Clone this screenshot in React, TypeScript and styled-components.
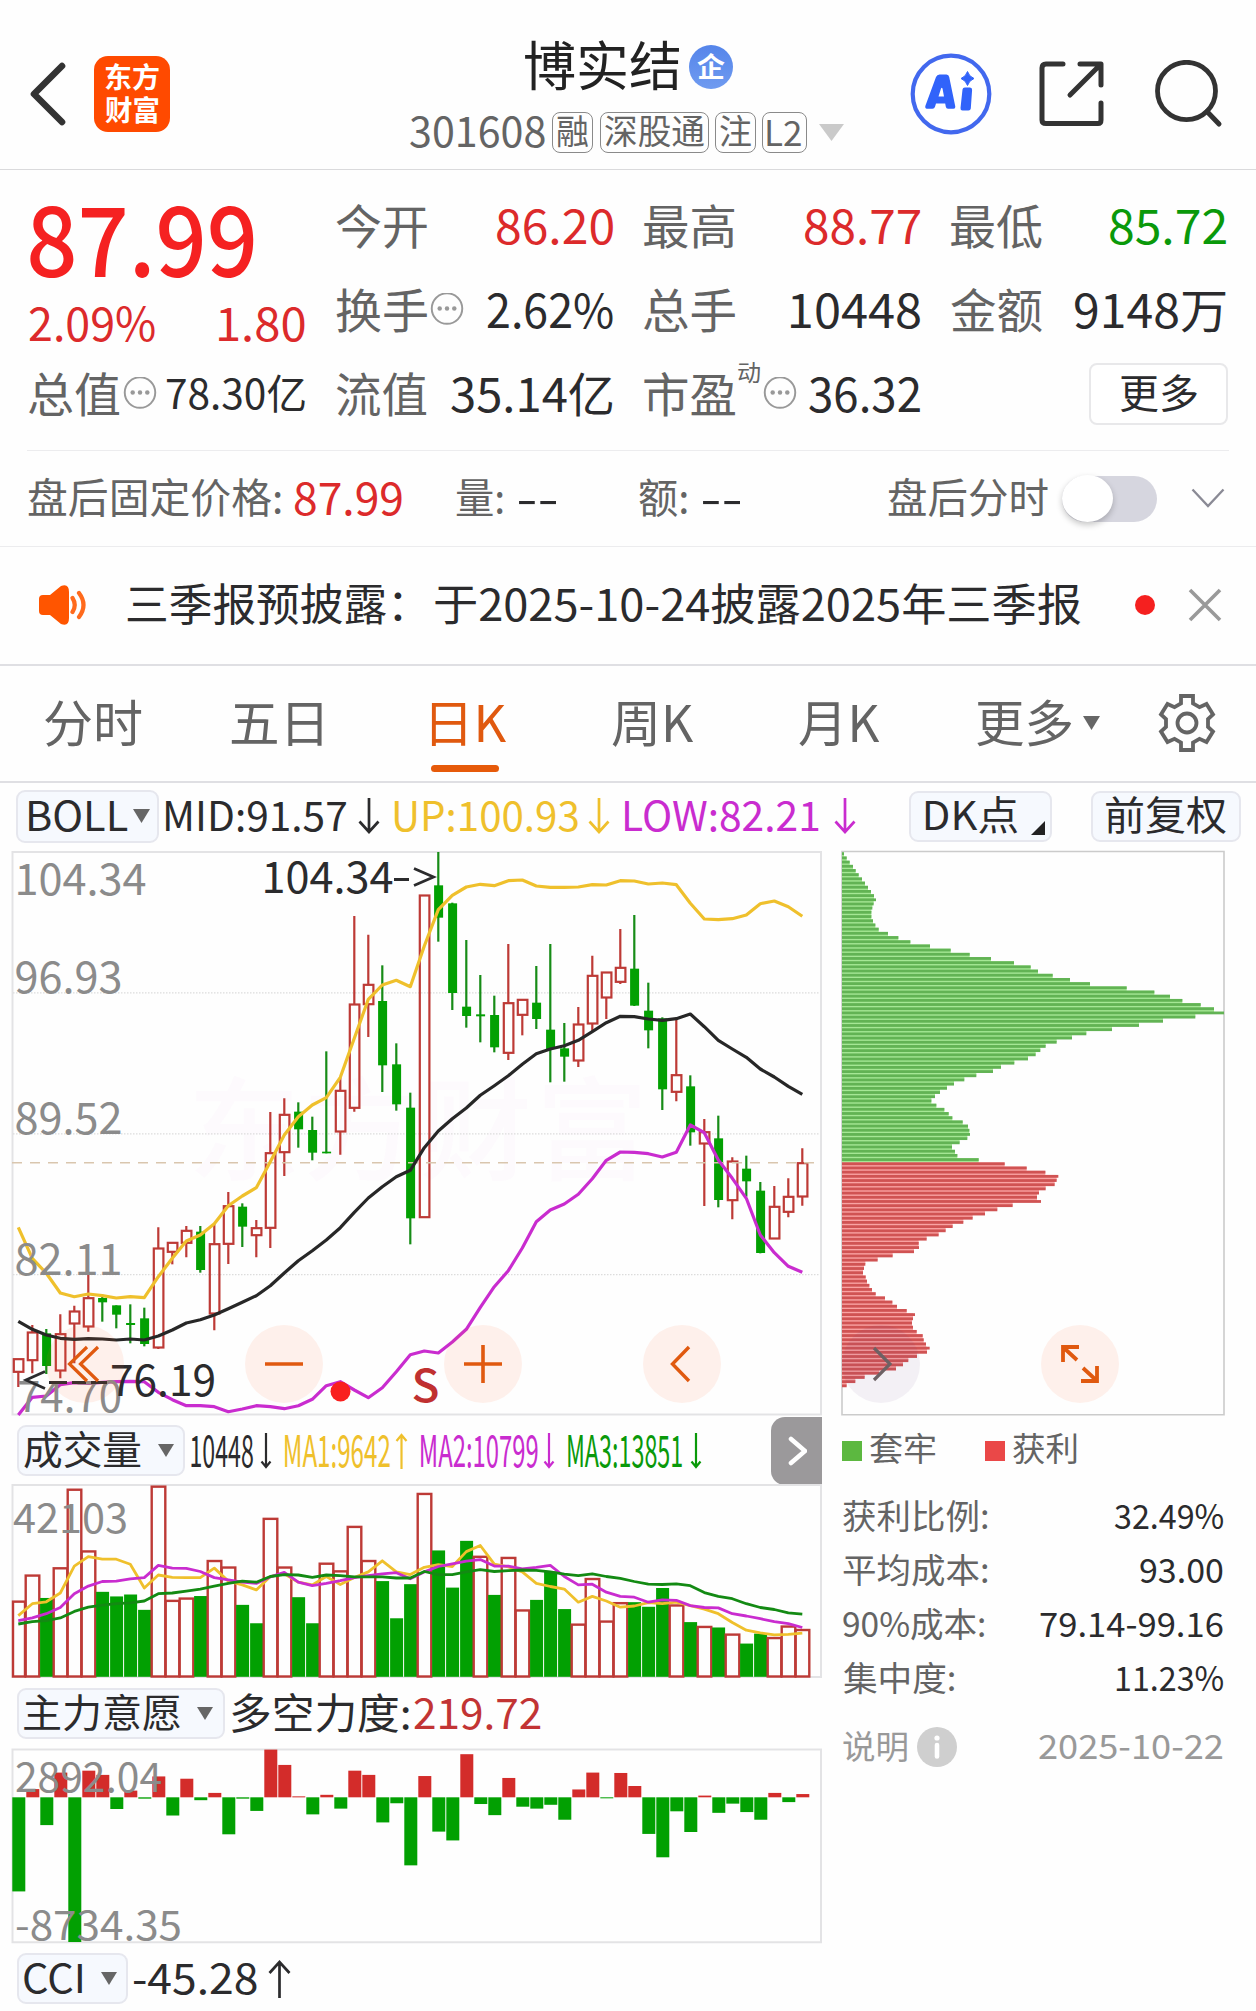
import React, { useLayoutEffect, useState } from 'react';
import styled, { createGlobalStyle, css } from 'styled-components';

const FONT = '"Noto Sans CJK SC", "Noto Sans", sans-serif';

const INK = '#2b2b2d';
const GREY = '#646464';
const RED = '#dc2a2b';
const GREEN = '#0a990a';
const YELLOW = '#efc02c';
const MAGENTA = '#c92ccf';
const ORANGE = '#e0590f';
const CANDLE_RED = '#bd3a36';
const CANDLE_GREEN = '#02a002';

const GlobalStyle = createGlobalStyle`
  * { box-sizing: border-box; }
  body {
    margin: 0;
    background: #fefefe;
    font-family: ${FONT};
    color: ${INK};
  }
  svg { display: block; flex: none; }
`;

/* ---------- Text that is set to an exact printed width ---------- */

const FitBox = styled.span<{ $w: number; $size: number; $ml: number; $color: string; $weight: number }>`
  display: block;
  flex: none;
  width: ${p => p.$w}px;
  height: ${p => p.$size}px;
  margin-left: ${p => p.$ml}px;
  line-height: ${p => p.$size}px;
  font-size: ${p => p.$size}px;
  font-weight: ${p => p.$weight};
  color: ${p => p.$color};
  white-space: nowrap;
`;

const FitInner = styled.span`
  display: inline-block;
  transform-origin: 0 50%;
  white-space: pre;
`;

type FitProps = {
  children: string;
  w: number;
  size: number;
  ml?: number;
  color?: string;
  weight?: number;
};

function Fit({ children, w, size, ml = 0, color = INK, weight = 400 }: FitProps) {
  const [t, setT] = useState({ x: 0, s: 1 });
  useLayoutEffect(() => {
    const ctx = document.createElement('canvas').getContext('2d');
    if (!ctx) return;
    ctx.font = `${weight} ${size}px ${FONT}`;
    const m = ctx.measureText(children);
    const ink = m.actualBoundingBoxRight + m.actualBoundingBoxLeft;
    const s = w / ink;
    setT({ x: m.actualBoundingBoxLeft * s, s });
  }, [children, w, size, weight]);
  return (
    <FitBox $w={w} $size={size} $ml={ml} $color={color} $weight={weight}>
      <FitInner style={{ transform: `translate(${t.x}px, -0.065em) scaleX(${t.s})` }}>{children}</FitInner>
    </FitBox>
  );
}

/* ---------- Layout parts ---------- */

const Page = styled.main`
  width: 1256px;
  height: 2011px;
  overflow: hidden;
  background: #fefefe;
`;

const Header = styled.header`
  display: flex;
  height: 170px;
  border-bottom: 1.5px solid #dadadc;
`;

const HeaderLeft = styled.div`
  display: flex;
  align-items: center;
  width: 410px;
  padding: 0 0 0 28px;
  height: 188px;
`;

const Logo = styled.div`
  display: flex;
  flex-direction: column;
  align-items: center;
  justify-content: center;
  gap: 5px;
  width: 76px;
  height: 76px;
  margin-left: 28px;
  border-radius: 14px;
  background: #ff4a00;
`;

const HeaderCenter = styled.div`
  display: flex;
  flex-direction: column;
  align-items: flex-start;
  width: 500px;
  padding-top: 33px;
`;

const TitleRow = styled.div`
  display: flex;
  align-items: center;
  height: 66px;
  padding-left: 115px;
`;

const Badge = styled.span`
  display: flex;
  align-items: center;
  justify-content: center;
  width: 44px;
  height: 44px;
  margin: 2px 0 0 10px;
  border-radius: 50%;
  background: linear-gradient(#5585ea, #6f9bf0);
`;

const CodeRow = styled.div`
  display: flex;
  align-items: center;
  height: 66px;
`;

const Tag = styled.span<{ $w: number; $ml: number }>`
  display: flex;
  align-items: center;
  justify-content: center;
  width: ${p => p.$w}px;
  height: 41px;
  margin-left: ${p => p.$ml}px;
  border: 1.5px solid #8a8a8a;
  border-radius: 8px;
`;

const HeaderRight = styled.div`
  display: flex;
  align-items: center;
  height: 188px;
`;

const Quote = styled.section`
  display: flex;
  height: 280px;
  padding-left: 28px;
`;

const MainCol = styled.div`
  width: 277px;
  padding-top: 15px;
`;

const QuoteCol = styled.div<{ $w: number; $ml: number }>`
  width: ${p => p.$w}px;
  margin-left: ${p => p.$ml}px;
  padding-top: 14px;
`;

const Cell = styled.div<{ $h?: number }>`
  display: flex;
  align-items: center;
  justify-content: space-between;
  height: ${p => p.$h ?? 84.2}px;
`;

const LabelGroup = styled.div`
  display: flex;
  align-items: center;
  gap: 3px;
`;

const Superscript = styled.span`
  margin-bottom: 43px;
`;

const MoreButton = styled.button`
  display: flex;
  align-items: center;
  justify-content: center;
  width: 139px;
  height: 62px;
  margin: 0 -2px 0 auto;
  padding: 0;
  border: 2px solid #e8e8ea;
  border-radius: 8px;
  background: #fff;
  font-family: inherit;
`;

const AfterHours = styled.section`
  display: flex;
  align-items: center;
  height: 96px;
  margin: 0 27px;
  padding-left: 1px;
  border-top: 1.5px solid #ececee;
`;

const Toggle = styled.span`
  display: flex;
  align-items: center;
  width: 95px;
  height: 46px;
  margin-left: 14px;
  border-radius: 23px;
  background: #d6d6df;
`;

const Knob = styled.span`
  width: 51px;
  height: 47px;
  border-radius: 50%;
  background: #fff;
  box-shadow: 0 3px 6px rgba(0, 0, 0, 0.22);
`;

const News = styled.section`
  display: flex;
  align-items: center;
  height: 118px;
  padding: 0 0 2px 38px;
  border-top: 1.5px solid #ececee;
`;

const Dot = styled.i`
  width: 20px;
  height: 20px;
  margin-left: 54px;
  border-radius: 50%;
  background: #f5201f;
`;

const Tabs = styled.nav`
  display: flex;
  align-items: center;
  height: 117px;
  border-top: 2px solid #dfdfe3;
  padding: 0 0 2px 45px;
`;

const Tab = styled.div<{ $ml?: number; $active?: boolean }>`
  position: relative;
  display: flex;
  align-items: center;
  height: 113px;
  margin-left: ${p => p.$ml ?? 0}px;
  ${p =>
    p.$active &&
    css`
      &::after {
        content: '';
        position: absolute;
        left: 0;
        bottom: 7px;
        width: 68px;
        height: 7px;
        border-radius: 4px;
        background: #e65a0a;
      }
    `}
`;

const Indicators = styled.div`
  display: flex;
  align-items: center;
  height: 69px;
  padding: 0 0 1px 16px;
  border-top: 2px solid #dfdfe3;
`;

const Select = styled.div<{ $w: number; $ml?: number; $h?: number; $pl?: number }>`
  display: flex;
  align-items: center;
  flex: none;
  width: ${p => p.$w}px;
  height: ${p => p.$h ?? 51}px;
  margin-left: ${p => p.$ml ?? 0}px;
  padding-left: ${p => p.$pl ?? 5}px;
  border: 2px solid #e6e7ee;
  border-radius: 9px;
  background: #f6f9fe;
`;

const Corner = styled.span`
  align-self: flex-end;
  width: 0;
  height: 0;
  margin: 0 0 5px 13px;
  border-left: 14px solid transparent;
  border-bottom: 14px solid #222;
`;

const Body = styled.div`
  display: flex;
`;

const ChartCol = styled.div`
  width: 812px;
  margin-left: 11px;
`;

const SubHeader = styled.div<{ $h: number }>`
  display: flex;
  align-items: center;
  height: ${p => p.$h}px;
  padding-left: 6px;
`;

const Expand = styled.button`
  display: flex;
  align-items: center;
  justify-content: center;
  width: 51px;
  height: 68px;
  margin: 0 1px 0 auto;
  padding: 0;
  border: 0;
  border-radius: 14px 0 0 14px;
  background: #9b999b;
`;

const ChartWrap = styled.div`
  position: relative;
`;

const Controls = styled.div<{ $left: number; $gap: number }>`
  position: absolute;
  left: ${p => p.$left}px;
  bottom: 14px;
  display: flex;
  gap: ${p => p.$gap}px;
`;

const Round = styled.button<{ $bg?: string; $shift?: number }>`
  display: flex;
  align-items: center;
  justify-content: center;
  width: 78px;
  height: 78px;
  padding: 0 ${p => p.$shift ?? 0}px 0 0;
  border: 0;
  border-radius: 50%;
  background: ${p => p.$bg ?? 'rgba(255, 100, 40, 0.09)'};
`;

const ChipCol = styled.aside`
  width: 386px;
  margin-left: 17px;
`;

const Legend = styled.div`
  display: flex;
  align-items: center;
  height: 66px;
  padding: 0 0 1px 2px;
`;

const Swatch = styled.i<{ $c: string; $ml?: number }>`
  width: 20px;
  height: 20px;
  margin: 3px 0 0 ${p => p.$ml ?? 0}px;
  background: ${p => p.$c};
`;

const Stat = styled.div<{ $h?: number }>`
  display: flex;
  align-items: center;
  justify-content: space-between;
  height: ${p => p.$h ?? 54}px;
  padding: 0 3px 0 3px;
`;

const Info = styled.span`
  display: flex;
  align-items: center;
  justify-content: center;
  width: 40px;
  height: 40px;
  margin-left: 7px;
  border-radius: 50%;
  background: #cfcfcf;
`;

/* ---------- Small drawings ---------- */

const Dots = () => (
  <svg width="34" height="34" viewBox="0 0 34 35">
    <circle cx="17" cy="16" r="15.7" fill="none" stroke="#999" strokeWidth="2" />
    {[9.5, 17, 24.5].map(x => (
      <circle key={x} cx={x} cy="16" r="2.3" fill="#999" />
    ))}
  </svg>
);

const Spaced = styled.span<{ $ml: number; $mt?: number }>`
  display: block;
  flex: none;
  margin-left: ${p => p.$ml}px;
  margin-top: ${p => p.$mt ?? 0}px;
`;

const Triangle = ({ w = 18, h = 14, fill = '#666' }: { w?: number; h?: number; fill?: string }) => (
  <svg width={w} height={h} viewBox="0 0 18 14" preserveAspectRatio="none">
    <path d="M0 0H18L9 14Z" fill={fill} />
  </svg>
);

const Arrow = ({ up, w = 22, h = 36, color }: { up?: boolean; w?: number; h?: number; color: string }) => {
  const m = w / 2;
  const d = up
    ? `M${m} ${h}V2M1.5 ${m + 1.5}L${m} 2L${w - 1.5} ${m + 1.5}`
    : `M${m} 0V${h - 2}M1.5 ${h - m - 1.5}L${m} ${h - 2}L${w - 1.5} ${h - m - 1.5}`;
  return (
    <svg width={w} height={h} viewBox={`0 0 ${w} ${h}`}>
      <path d={d} fill="none" stroke={color} strokeWidth={w < 16 ? 2.2 : 2.7} />
    </svg>
  );
};

/* ---------- Chart data ---------- */

const X = (i: number) => 18.3 + 14 * i;

// Candle: [up?, high, body top, body bottom, low], in thirds of a pixel below y = 840
const CANDLES: [number, number, number, number, number][] = [
  [1, 1556, 1556, 1597, 1641], [1, 1455, 1476, 1562, 1600], [0, 1467, 1480, 1578, 1602],
  [1, 1423, 1481, 1593, 1615], [1, 1397, 1413, 1452, 1570], [1, 1303, 1373, 1461, 1475],
  [0, 1364, 1374, 1387, 1445], [0, 1396, 1396, 1424, 1465], [0, 1393, 1449, 1455, 1510],
  [0, 1403, 1435, 1512, 1519], [1, 1162, 1224, 1524, 1527], [1, 1207, 1207, 1237, 1273],
  [1, 1158, 1171, 1210, 1252], [0, 1158, 1175, 1290, 1298], [1, 1150, 1211, 1422, 1471],
  [1, 1056, 1097, 1213, 1272], [0, 1090, 1100, 1160, 1221], [1, 1140, 1163, 1187, 1252],
  [1, 816, 938, 1165, 1224], [1, 775, 823, 938, 1008], [0, 787, 815, 868, 923],
  [0, 830, 870, 938, 961], [0, 634, 935, 940, 940], [1, 712, 751, 876, 944],
  [1, 228, 492, 805, 815], [1, 284, 433, 494, 591], [0, 376, 483, 676, 756],
  [0, 610, 673, 793, 812], [0, 758, 803, 1135, 1213], [1, 165, 165, 1133, 1133],
  [0, 36, 136, 233, 305], [0, 188, 190, 459, 510], [0, 300, 500, 528, 563],
  [0, 405, 523, 529, 607], [0, 467, 525, 622, 637], [1, 312, 488, 640, 660],
  [1, 478, 478, 526, 586], [0, 378, 488, 537, 567], [0, 312, 569, 627, 727],
  [0, 549, 625, 650, 725], [1, 501, 552, 663, 681], [1, 347, 406, 552, 575],
  [1, 396, 396, 474, 537], [1, 267, 382, 427, 432], [0, 225, 386, 497, 498],
  [0, 428, 512, 571, 625], [0, 532, 535, 748, 810], [1, 535, 704, 757, 784],
  [0, 706, 739, 877, 917], [1, 837, 875, 912, 1098], [0, 827, 895, 1080, 1102],
  [1, 952, 963, 1082, 1138], [0, 947, 986, 1024, 1070], [0, 1026, 1052, 1239, 1240],
  [1, 1038, 1099, 1197, 1197], [1, 1015, 1069, 1117, 1132], [1, 925, 968, 1071, 1097],
];

const BOLL_UP = [1162, 1255, 1300, 1359, 1370, 1362, 1367, 1374, 1370, 1373, 1310, 1255, 1203, 1185, 1151, 1097, 1068, 1043, 965, 885, 830, 795, 773, 712, 595, 478, 435, 421, 440, 318, 209, 166, 141, 133, 137, 122, 120, 138, 142, 142, 141, 134, 135, 122, 123, 132, 129, 134, 190, 237, 239, 236, 225, 191, 183, 200, 229];
const BOLL_MID = [1444, 1468, 1485, 1495, 1498, 1496, 1497, 1500, 1497, 1500, 1488, 1470, 1449, 1439, 1425, 1406, 1387, 1367, 1337, 1299, 1262, 1232, 1200, 1163, 1117, 1074, 1040, 1010, 991, 923, 873, 836, 804, 766, 737, 707, 673, 641, 627, 617, 601, 575, 548, 529, 530, 537, 541, 536, 522, 560, 601, 627, 652, 687, 711, 739, 763];
const BOLL_LOW = [1725, 1672, 1668, 1634, 1628, 1630, 1627, 1625, 1624, 1625, 1657, 1679, 1697, 1697, 1700, 1715, 1707, 1697, 1700, 1706, 1697, 1678, 1637, 1625, 1650, 1673, 1643, 1595, 1544, 1533, 1539, 1506, 1468, 1402, 1340, 1292, 1224, 1145, 1110, 1092, 1063, 1016, 961, 936, 937, 941, 951, 937, 855, 878, 960, 1015, 1075, 1185, 1238, 1279, 1297];

const kY = (v: number) => 840 + v / 3;
// Volume and force panes share one scale below y = 1410
const vY = (v: number) => 1410 + v / 2.609;

const VOLUMES = [500, 432, 493, 413, 208, 369, 477, 489, 484, 524, 200, 498, 492, 488, 394, 411, 511, 559, 284, 411, 491, 559, 401, 421, 305, 394, 449, 546, 457, 219, 369, 466, 344, 383, 485, 386, 523, 498, 424, 522, 560, 441, 552, 504, 504, 516, 467, 510, 556, 566, 570, 586, 612, 586, 595, 565, 574];
const VOL_RED = new Set([0, 1, 3, 4, 5, 10, 11, 12, 14, 15, 18, 19, 22, 23, 24, 25, 29, 33, 35, 36, 40, 41, 42, 43, 47, 49, 51, 54, 55, 56]);
const MA1 = [539, 508, 503, 480, 410, 385, 392, 392, 405, 467, 433, 439, 440, 440, 415, 449, 459, 472, 437, 430, 452, 459, 437, 458, 440, 425, 396, 425, 432, 413, 406, 411, 372, 356, 405, 412, 425, 455, 463, 470, 504, 489, 501, 517, 514, 505, 508, 504, 513, 522, 534, 557, 577, 584, 589, 588, 585];
const MA2 = [552, 545, 534, 518, 482, 462, 450, 449, 443, 440, 408, 415, 416, 424, 440, 446, 452, 455, 438, 426, 452, 461, 455, 448, 440, 435, 430, 427, 443, 425, 411, 404, 397, 393, 410, 410, 417, 413, 408, 437, 459, 457, 478, 489, 491, 504, 498, 499, 513, 518, 519, 534, 540, 547, 555, 560, 570];
const MA3 = [561, 555, 552, 545, 528, 517, 512, 508, 506, 501, 482, 480, 475, 470, 462, 455, 449, 452, 437, 432, 433, 439, 433, 435, 438, 438, 438, 441, 441, 424, 432, 432, 425, 419, 424, 422, 420, 421, 425, 431, 435, 430, 437, 442, 450, 457, 458, 456, 461, 479, 489, 495, 508, 518, 523, 532, 535];
const FORCE = [1256, 989, 1083, 946, 1388, 941, 952, 1041, 993, 1014, 956, 1058, 962, 1018, 999, 1107, 1014, 1046, 886, 926, 1008, 1055, 1004, 1040, 941, 952, 1076, 1026, 1188, 955, 1100, 1123, 898, 1028, 1057, 960, 1035, 1040, 1030, 1069, 990, 946, 1013, 947, 981, 1106, 1167, 1047, 1101, 1006, 1051, 1027, 1049, 1069, 999, 1023, 1002];

const CHIPS = [72, 80, 89, 99, 107, 116, 126, 135, 144, 153, 162, 168, 161, 157, 154, 154, 159, 166, 176, 204, 235, 271, 330, 392, 449, 513, 582, 632, 654, 698, 750, 810, 920, 1003, 1050, 1087, 1142, 1182, 1212, 1126, 1029, 957, 876, 799, 756, 710, 677, 661, 647, 624, 583, 543, 519, 469, 433, 402, 381, 360, 345, 334, 349, 373, 386, 397, 428, 444, 448, 450, 442, 419, 396, 405, 412, 476, 554, 620, 676, 715, 710, 704, 677, 657, 651, 663, 578, 532, 495, 458, 430, 398, 377, 356, 320, 296, 297, 282, 218, 173, 136, 132, 129, 137, 141, 148, 156, 167, 195, 217, 231, 260, 285, 279, 276, 279, 290, 308, 311, 318, 329, 321, 291, 265, 249, 228, 178, 134, 106, 80];
const FIRST_PROFIT = 74;

const line = (vals: number[], y: (v: number) => number) =>
  vals.map((v, i) => `${X(i).toFixed(1)},${y(v).toFixed(1)}`).join(' ');

type ChartTextProps = { x: number; y: number; size: number; len: number; fill?: string; children: string; weight?: number };
const ChartText = ({ x, y, size, len, fill = '#8b8b8b', children, weight = 400 }: ChartTextProps) => (
  <text x={x} y={y} fontSize={size} fontWeight={weight} fontFamily={FONT} fill={fill} textLength={len} lengthAdjust="spacingAndGlyphs">
    {children}
  </text>
);

function KChart() {
  return (
    <svg width="812" height="567" viewBox="11 850 812 567">
      <text x="188" y="1172" fontSize="112" fontWeight="500" fontFamily={FONT} fill="#fdfafd" textLength="460">
        东方财富
      </text>
      <path d="M12.5 852H821V1414.6H12.5Z" fill="none" stroke="#e3e3e5" strokeWidth="2" />
      {[992.8, 1133.8, 1274.6].map(y => (
        <path key={y} d={`M13 ${y}H820`} stroke="#dcdcdc" strokeWidth="1.2" strokeDasharray="1.5 1.5" />
      ))}
      {CANDLES.map(([up, hi, top, bot, low], i) => {
        const x = X(i);
        return up ? (
          <g key={i} stroke={CANDLE_RED} strokeWidth="2.2" fill="none">
            <path d={`M${x} ${kY(hi)}V${kY(top)}M${x} ${kY(bot)}V${kY(low)}`} />
            <rect x={x - 4.5} y={kY(top) + 0.5} width="9.6" height={(bot - top) / 3 - 1} />
          </g>
        ) : (
          <g key={i} fill={CANDLE_GREEN}>
            <rect x={x - 1.1} y={kY(hi)} width="2.2" height={(low - hi) / 3} fill="#178c17" />
            <rect x={x - 4.2} y={kY(top)} width="9" height={(bot - top) / 3} />
          </g>
        );
      })}
      <path d="M12 1162.8H815" stroke="#d9c6ae" strokeWidth="1.6" strokeDasharray="10 8" />
      <g fill="none" strokeWidth="3.2" strokeLinejoin="round">
        <polyline points={line(BOLL_UP, kY)} stroke={YELLOW} />
        <polyline points={line(BOLL_MID, kY)} stroke="#272727" />
        <polyline points={line(BOLL_LOW, kY)} stroke={MAGENTA} />
      </g>
      <ChartText x={14.5} y={895} size={44} len={132}>104.34</ChartText>
      <ChartText x={14.5} y={993} size={44} len={108}>96.93</ChartText>
      <ChartText x={14.5} y={1134} size={44} len={108}>89.52</ChartText>
      <ChartText x={14.5} y={1275} size={44} len={108}>82.11</ChartText>
      <ChartText x={17} y={1412} size={44} len={105}>74.70</ChartText>
      <ChartText x={261.5} y={893} size={44} len={132} fill={INK}>104.34</ChartText>
      <path d="M394 879.5H409M414 868.5L433.5 877L414 885.5" fill="none" stroke={INK} strokeWidth="2.8" />
      <ChartText x={110} y={1396} size={44} len={106} fill={INK}>76.19</ChartText>
      <path d="M45 1371.5L26 1380L45 1388.5M49 1382.5H67M72 1382.5H86M91 1382.5H107" fill="none" stroke={INK} strokeWidth="2.8" />
      <circle cx="340.5" cy="1391.5" r="10" fill="#f9201f" />
      <ChartText x={411.5} y={1401.5} size={45} len={28} fill="#c03030" weight={500}>S</ChartText>
    </svg>
  );
}

function VolumeChart() {
  return (
    <svg width="812" height="195" viewBox="11 1485 812 195">
      <path d="M12.5 1486H821V1678H12.5Z" fill="none" stroke="#e3e3e5" strokeWidth="2" />
      {VOLUMES.map((v, i) =>
        VOL_RED.has(i) ? (
          <rect key={i} x={Math.max(X(i) - 6.6, 13)} y={vY(v) + 1} width={i ? 13.6 : 12} height={1676.5 - vY(v)} fill="#fefefe" stroke={CANDLE_RED} strokeWidth="2.4" />
        ) : (
          <rect key={i} x={X(i) - 6.2} y={vY(v)} width="13" height={1677.8 - vY(v)} fill={CANDLE_GREEN} />
        ),
      )}
      <g fill="none" strokeWidth="2.8" strokeLinejoin="round">
        <polyline points={line(MA1, vY)} stroke={YELLOW} />
        <polyline points={line(MA2, vY)} stroke={MAGENTA} />
        <polyline points={line(MA3, vY)} stroke="#138a13" />
      </g>
      <ChartText x={13} y={1534} size={41} len={115}>42103</ChartText>
    </svg>
  );
}

function ForceChart() {
  const zero = vY(1010.5);
  return (
    <svg width="812" height="196" viewBox="11 1748 812 196">
      <path d="M12.5 1749.5H821V1942.3H12.5Z" fill="none" stroke="#e3e3e5" strokeWidth="2" />
      {FORCE.map((v, i) => {
        const y = vY(v);
        return (
          <rect
            key={i}
            x={X(i) - 6}
            y={Math.min(y, zero)}
            width="13"
            height={Math.max(Math.abs(y - zero), 1)}
            fill={y < zero ? '#d32c2a' : CANDLE_GREEN}
          />
        );
      })}
      <ChartText x={15} y={1792} size={40} len={147}>2892.04</ChartText>
      <ChartText x={15} y={1940} size={40} len={167}>-8734.35</ChartText>
    </svg>
  );
}

function ChipChart() {
  const step = 10.95 / 2.6133;
  return (
    <svg width="386" height="567" viewBox="840 850 386 567">
      <path d="M842 851.5H1224V1414.8H842Z" fill="none" stroke="#cbcbcb" strokeWidth="1.6" />
      {CHIPS.map((e, i) => {
        const y = 852.3 + i * step;
        const next = CHIPS[i + 1] ?? 66;
        const profit = i >= FIRST_PROFIT;
        return (
          <g key={i}>
            <rect x="842" y={y} width={(Math.min(e, next) - 66) / 3} height={step + 1} fill={profit ? '#f9a3a3' : '#a5e795'} />
            <rect x="842" y={y} width={(e - 66) / 3} height="2.8" fill={profit ? '#d05353' : '#62b354'} />
          </g>
        );
      })}
    </svg>
  );
}

/* ---------- Page ---------- */

export default function App() {
  return (
    <Page>
      <GlobalStyle />

      <Header>
        <HeaderLeft>
          <svg width="38" height="64" viewBox="0 0 38 64">
            <path d="M34 4L6 32L34 60" fill="none" stroke="#333" strokeWidth="6.6" strokeLinecap="round" strokeLinejoin="round" />
          </svg>
          <Logo>
            <Fit w={54} size={28} color="#fff" weight={700}>东方</Fit>
            <Fit w={54} size={28} color="#fff" weight={700}>财富</Fit>
          </Logo>
        </HeaderLeft>
        <HeaderCenter>
          <TitleRow>
            <Fit w={154} size={53} color="#222">博实结</Fit>
            <Badge>
              <Fit w={28} size={27} color="#fff" weight={700}>企</Fit>
            </Badge>
          </TitleRow>
          <CodeRow>
            <Fit w={135} size={42} color={GREY}>301608</Fit>
            <Tag $w={41} $ml={7}><Fit w={31} size={34} color={GREY}>融</Fit></Tag>
            <Tag $w={109} $ml={6.5}><Fit w={99} size={34} color={GREY}>深股通</Fit></Tag>
            <Tag $w={41} $ml={6}><Fit w={31} size={34} color={GREY}>注</Fit></Tag>
            <Tag $w={45} $ml={6}><Fit w={34} size={35} color={GREY}>L2</Fit></Tag>
            <Spaced $ml={12}><Triangle w={25} h={17} fill="#cacaca" /></Spaced>
          </CodeRow>
        </HeaderCenter>
        <HeaderRight>
          <svg width="82" height="82" viewBox="0 0 82 82">
            <circle cx="41" cy="41" r="38.3" fill="#fff" stroke="#4268ee" strokeWidth="4.2" />
            <path
              fillRule="evenodd"
              d="M15.500 52.500L26 24Q27 21.500 29.500 21.500H36.500Q38.800 21.500 39.200 24L45.300 53.500Q45.600 55.700 43.500 55.700H38Q36.200 55.700 35.800 53.800L35.200 50.500H26L25 53.800Q24.400 55.700 22.500 55.700H17Q14.500 55.500 15.500 52.500ZM28.500 43.500H34L32.500 35.500Q31.800 34 31 35.500Z"
              fill="#3163fa"
            />
            <path d="M52.500 36.500Q52.800 34.500 54.800 34.500H60Q62.300 34.500 62.100 37L60.800 55.500Q60.500 57.500 58.500 57.500H52.500Q50.300 57.500 50.500 55Z" fill="#3163fa" />
            <path d="M57.500 18.500Q59 23.500 64 25.500Q59 27.500 57.500 32.500Q56 27.500 51 25.500Q56 23.500 57.500 18.500Z" fill="#3163fa" stroke="#3163fa" strokeWidth="1" />
          </svg>
          <Spaced $ml={47}>
            <svg width="66" height="66" viewBox="0 0 66 66">
              <path
                d="M24 3H7Q3 3 3 7V59Q3 62.500 7 62.500H59Q62 62.500 62 59V42M41 3H62V24M61 4L31 34"
                fill="none" stroke="#333" strokeWidth="5" strokeLinecap="round" strokeLinejoin="round"
              />
            </svg>
          </Spaced>
          <Spaced $ml={50}>
            <svg width="68" height="68" viewBox="0 0 68 68">
              <ellipse cx="31.500" cy="31" rx="29" ry="28.700" fill="none" stroke="#333" strokeWidth="4.800" />
              <path d="M52 51.500L64 64" stroke="#333" strokeWidth="5" strokeLinecap="round" />
            </svg>
          </Spaced>
        </HeaderRight>
      </Header>

      <Quote>
        <MainCol>
          <Cell $h={111}><Fit w={224} size={97} ml={2} color="#f52121" weight={500}>87.99</Fit></Cell>
          <Cell $h={56}>
            <Fit w={126} size={46} ml={1} color={RED}>2.09%</Fit>
            <Fit w={86} size={46} color={RED}>1.80</Fit>
          </Cell>
          <Cell $h={84}>
            <LabelGroup><Fit w={91} size={47} ml={1} color={GREY}>总值</Fit><Dots /></LabelGroup>
            <Fit w={138} size={41}>78.30亿</Fit>
          </Cell>
        </MainCol>
        <QuoteCol $w={277} $ml={31}>
          <Cell><Fit w={91} size={47} color={GREY}>今开</Fit><Fit w={116} size={47} color={RED}>86.20</Fit></Cell>
          <Cell>
            <LabelGroup><Fit w={91} size={47} color={GREY}>换手</Fit><Dots /></LabelGroup>
            <Fit w={126} size={47}>2.62%</Fit>
          </Cell>
          <Cell><Fit w={91} size={47} color={GREY}>流值</Fit><Fit w={162} size={47}>35.14亿</Fit></Cell>
        </QuoteCol>
        <QuoteCol $w={276} $ml={31}>
          <Cell><Fit w={91} size={47} color={GREY}>最高</Fit><Fit w={115} size={47} color={RED}>88.77</Fit></Cell>
          <Cell><Fit w={91} size={47} color={GREY}>总手</Fit><Fit w={129} size={47}>10448</Fit></Cell>
          <Cell>
            <LabelGroup>
              <Fit w={91} size={47} color={GREY}>市盈</Fit>
              <Superscript><Fit w={22} size={23} color={GREY}>动</Fit></Superscript>
              <Dots />
            </LabelGroup>
            <Fit w={111} size={47}>36.32</Fit>
          </Cell>
        </QuoteCol>
        <QuoteCol $w={275} $ml={31}>
          <Cell><Fit w={91} size={47} color={GREY}>最低</Fit><Fit w={116} size={47} color={GREEN}>85.72</Fit></Cell>
          <Cell><Fit w={91} size={47} color={GREY}>金额</Fit><Fit w={151} size={47}>9148万</Fit></Cell>
          <Cell><MoreButton><Fit w={77} size={40}>更多</Fit></MoreButton></Cell>
        </QuoteCol>
      </Quote>

      <AfterHours>
        <Fit w={253} size={41} color={GREY}>盘后固定价格:</Fit>
        <Fit w={107} size={45} ml={14} color={RED}>87.99</Fit>
        <Fit w={47} size={41} ml={54} color={GREY}>量:</Fit>
        <Fit w={38} size={44} ml={16}>--</Fit>
        <Fit w={48} size={41} ml={82} color={GREY}>额:</Fit>
        <Fit w={38} size={44} ml={16}>--</Fit>
        <Fit w={160} size={41} ml={147} color={GREY}>盘后分时</Fit>
        <Toggle><Knob /></Toggle>
        <Spaced $ml={34}>
          <svg width="34" height="21" viewBox="0 0 34 21">
            <path d="M1.500 1.500L17 18L32.500 1.500" fill="none" stroke="#8a8a95" strokeWidth="2.300" />
          </svg>
        </Spaced>
      </AfterHours>

      <News>
        <svg width="50" height="42" viewBox="0 0 50 42">
          <path d="M1 15Q1 11 5 11H12L23 2Q31 -1 31 8V34Q31 43 23 40L12 31H5Q1 31 1 27Z" fill="#ff5500" />
          <path d="M34.500 14Q39 21 34.500 28M41 9Q50 21 41 33" fill="none" stroke="#ff6a1c" strokeWidth="4.200" strokeLinecap="round" />
        </svg>
        <Fit w={275} size={44} ml={39}>三季报预披露：</Fit>
        <Fit w={646} size={44} ml={33}>于2025-10-24披露2025年三季报</Fit>
        <Dot />
        <Spaced $ml={33}>
          <svg width="34" height="34" viewBox="0 0 34 34">
            <path d="M2 2L32 32M32 2L2 32" stroke="#999" strokeWidth="3.600" />
          </svg>
        </Spaced>
      </News>

      <Tabs>
        <Tab><Fit w={97} size={50} color={GREY}>分时</Fit></Tab>
        <Tab $ml={89}><Fit w={91} size={50} color={GREY}>五日</Fit></Tab>
        <Tab $ml={109} $active><Fit w={76} size={50} color={ORANGE}>日K</Fit></Tab>
        <Tab $ml={105}><Fit w={82} size={50} color={GREY}>周K</Fit></Tab>
        <Tab $ml={105}><Fit w={81} size={50} color={GREY}>月K</Fit></Tab>
        <Tab $ml={97}>
          <Fit w={95} size={50} color={GREY}>更多</Fit>
          <Spaced $ml={11}><Triangle w={17} h={14} /></Spaced>
        </Tab>
        <Spaced $ml={58}>
          <svg width="58" height="58" viewBox="0 0 58 58">
            <path
              d="M23 2H35V9.500L41.500 13.200L48.500 10L55 20.500L50 25V33L55 37.500L48.500 48L41.500 44.800L35 48.500V56H23V48.500L16.500 44.800L9.500 48L3 37.500L8 33V25L3 20.500L9.500 10L16.500 13.200L23 9.500Z"
              fill="none" stroke={GREY} strokeWidth="3.800" strokeLinejoin="miter"
            />
            <circle cx="29" cy="29" r="9.500" fill="none" stroke={GREY} strokeWidth="3.800" />
          </svg>
        </Spaced>
      </Tabs>

      <Indicators>
        <Select $w={143} $h={53} $pl={11}>
          <Fit w={99} size={41}>BOLL</Fit>
          <Spaced $ml={5}><Triangle w={17} h={14} /></Spaced>
        </Select>
        <Fit w={180} size={41} ml={7}>MID:91.57</Fit>
        <Spaced $ml={12}><Arrow color={INK} /></Spaced>
        <Fit w={183} size={41} ml={15} color={YELLOW}>UP:100.93</Fit>
        <Spaced $ml={10}><Arrow color={YELLOW} /></Spaced>
        <Fit w={194} size={41} ml={15} color={MAGENTA}>LOW:82.21</Fit>
        <Spaced $ml={15}><Arrow color={MAGENTA} /></Spaced>
        <Select $w={143} $ml={53} $pl={15}>
          <Fit w={92} size={40}>DK点</Fit>
          <Corner />
        </Select>
        <Select $w={150} $ml={39} $pl={13}>
          <Fit w={120} size={40}>前复权</Fit>
        </Select>
      </Indicators>

      <Body>
        <ChartCol>
          <ChartWrap>
            <KChart />
            <Controls $left={35} $gap={121}>
              <Round $shift={5}>
                <svg width="34" height="38" viewBox="0 0 34 38">
                  <path d="M21 2L3.500 19L21 36M32 2L14.500 19L32 36" fill="none" stroke={ORANGE} strokeWidth="3.200" />
                </svg>
              </Round>
              <Round>
                <svg width="38" height="4" viewBox="0 0 38 4"><path d="M0 2H38" stroke={ORANGE} strokeWidth="3.600" /></svg>
              </Round>
              <Round>
                <svg width="38" height="38" viewBox="0 0 38 38">
                  <path d="M0 19H38M19 0V38" stroke={ORANGE} strokeWidth="3.600" />
                </svg>
              </Round>
              <Round $shift={3}>
                <svg width="22" height="38" viewBox="0 0 22 38">
                  <path d="M19 2L2.500 19L19 36" fill="none" stroke={ORANGE} strokeWidth="3.400" />
                </svg>
              </Round>
            </Controls>
          </ChartWrap>

          <SubHeader $h={67}>
            <Select $w={168}>
              <Fit w={117} size={39}>成交量</Fit>
              <Spaced $ml={17}><Triangle w={16} h={13} /></Spaced>
            </Select>
            <Fit w={62} size={44} ml={6}>10448</Fit>
            <Spaced $ml={7}><Arrow w={12} color={INK} /></Spaced>
            <Fit w={105} size={44} ml={13} color={YELLOW}>MA1:9642</Fit>
            <Spaced $ml={5}><Arrow w={13} up color={YELLOW} /></Spaced>
            <Fit w={117} size={44} ml={13} color={MAGENTA}>MA2:10799</Fit>
            <Spaced $ml={5}><Arrow w={12} color={MAGENTA} /></Spaced>
            <Fit w={114} size={44} ml={13} color={GREEN}>MA3:13851</Fit>
            <Spaced $ml={8}><Arrow w={12} color={GREEN} /></Spaced>
            <Expand>
              <svg width="20" height="30" viewBox="0 0 20 30">
                <path d="M4 3L18 15L4 27" fill="none" stroke="#fff" strokeWidth="4.600" strokeLinecap="round" />
              </svg>
            </Expand>
          </SubHeader>
          <VolumeChart />

          <SubHeader $h={69}>
            <Select $w={208}>
              <Fit w={156} size={39}>主力意愿</Fit>
              <Spaced $ml={17}><Triangle w={16} h={13} /></Spaced>
            </Select>
            <Fit w={177} size={42} ml={7}>多空力度:</Fit>
            <Fit w={127} size={42} ml={5} color="#c23434">219.72</Fit>
          </SubHeader>
          <ForceChart />

          <SubHeader $h={69}>
            <Select $w={111}>
              <Fit w={58} size={40}>CCI</Fit>
              <Spaced $ml={19}><Triangle w={16} h={13} /></Spaced>
            </Select>
            <Fit w={124} size={42} ml={5}>-45.28</Fit>
            <Spaced $ml={11}><Arrow w={23} h={38} up color={INK} /></Spaced>
          </SubHeader>
        </ChartCol>

        <ChipCol>
          <ChartWrap>
            <ChipChart />
            <Controls $left={2} $gap={121}>
              <Round $bg="rgba(100, 60, 130, 0.07)">
                <svg width="22" height="36" viewBox="0 0 22 36">
                  <path d="M4 2L20 18L4 34" fill="none" stroke="#6d6164" strokeWidth="3.200" />
                </svg>
              </Round>
              <Round>
                <svg width="38" height="38" viewBox="0 0 38 38">
                  <path d="M2 17V2H18M3 3L16 15M36 21V36H20M35 35L22 23" fill="none" stroke={ORANGE} strokeWidth="3.800" />
                </svg>
              </Round>
            </Controls>
          </ChartWrap>
          <Legend>
            <Swatch $c="#5cb840" />
            <Fit w={65} size={33} ml={8} color={GREY}>套牢</Fit>
            <Swatch $c="#ea4848" $ml={50} />
            <Fit w={64} size={33} ml={8} color={GREY}>获利</Fit>
          </Legend>
          <Spaced $ml={0} $mt={7}>
            <Stat><Fit w={144} size={34} color={GREY}>获利比例:</Fit><Fit w={109} size={34}>32.49%</Fit></Stat>
            <Stat><Fit w={144} size={34} color={GREY}>平均成本:</Fit><Fit w={83} size={34}>93.00</Fit></Stat>
            <Stat><Fit w={141} size={34} color={GREY}>90%成本:</Fit><Fit w={183} size={34}>79.14-99.16</Fit></Stat>
            <Stat><Fit w={111} size={34} color={GREY}>集中度:</Fit><Fit w={107} size={34}>11.23%</Fit></Stat>
            <Stat $h={82}>
              <LabelGroup>
                <Fit w={64} size={33} color="#999">说明</Fit>
                <Info>
                  <svg width="8" height="24" viewBox="0 0 8 24">
                    <circle cx="4" cy="3" r="2.600" fill="#fff" />
                    <path d="M4 10V21.500" stroke="#fff" strokeWidth="4.600" strokeLinecap="round" />
                  </svg>
                </Info>
              </LabelGroup>
              <Fit w={184} size={34} color="#999">2025-10-22</Fit>
            </Stat>
          </Spaced>
        </ChipCol>
      </Body>
    </Page>
  );
}
